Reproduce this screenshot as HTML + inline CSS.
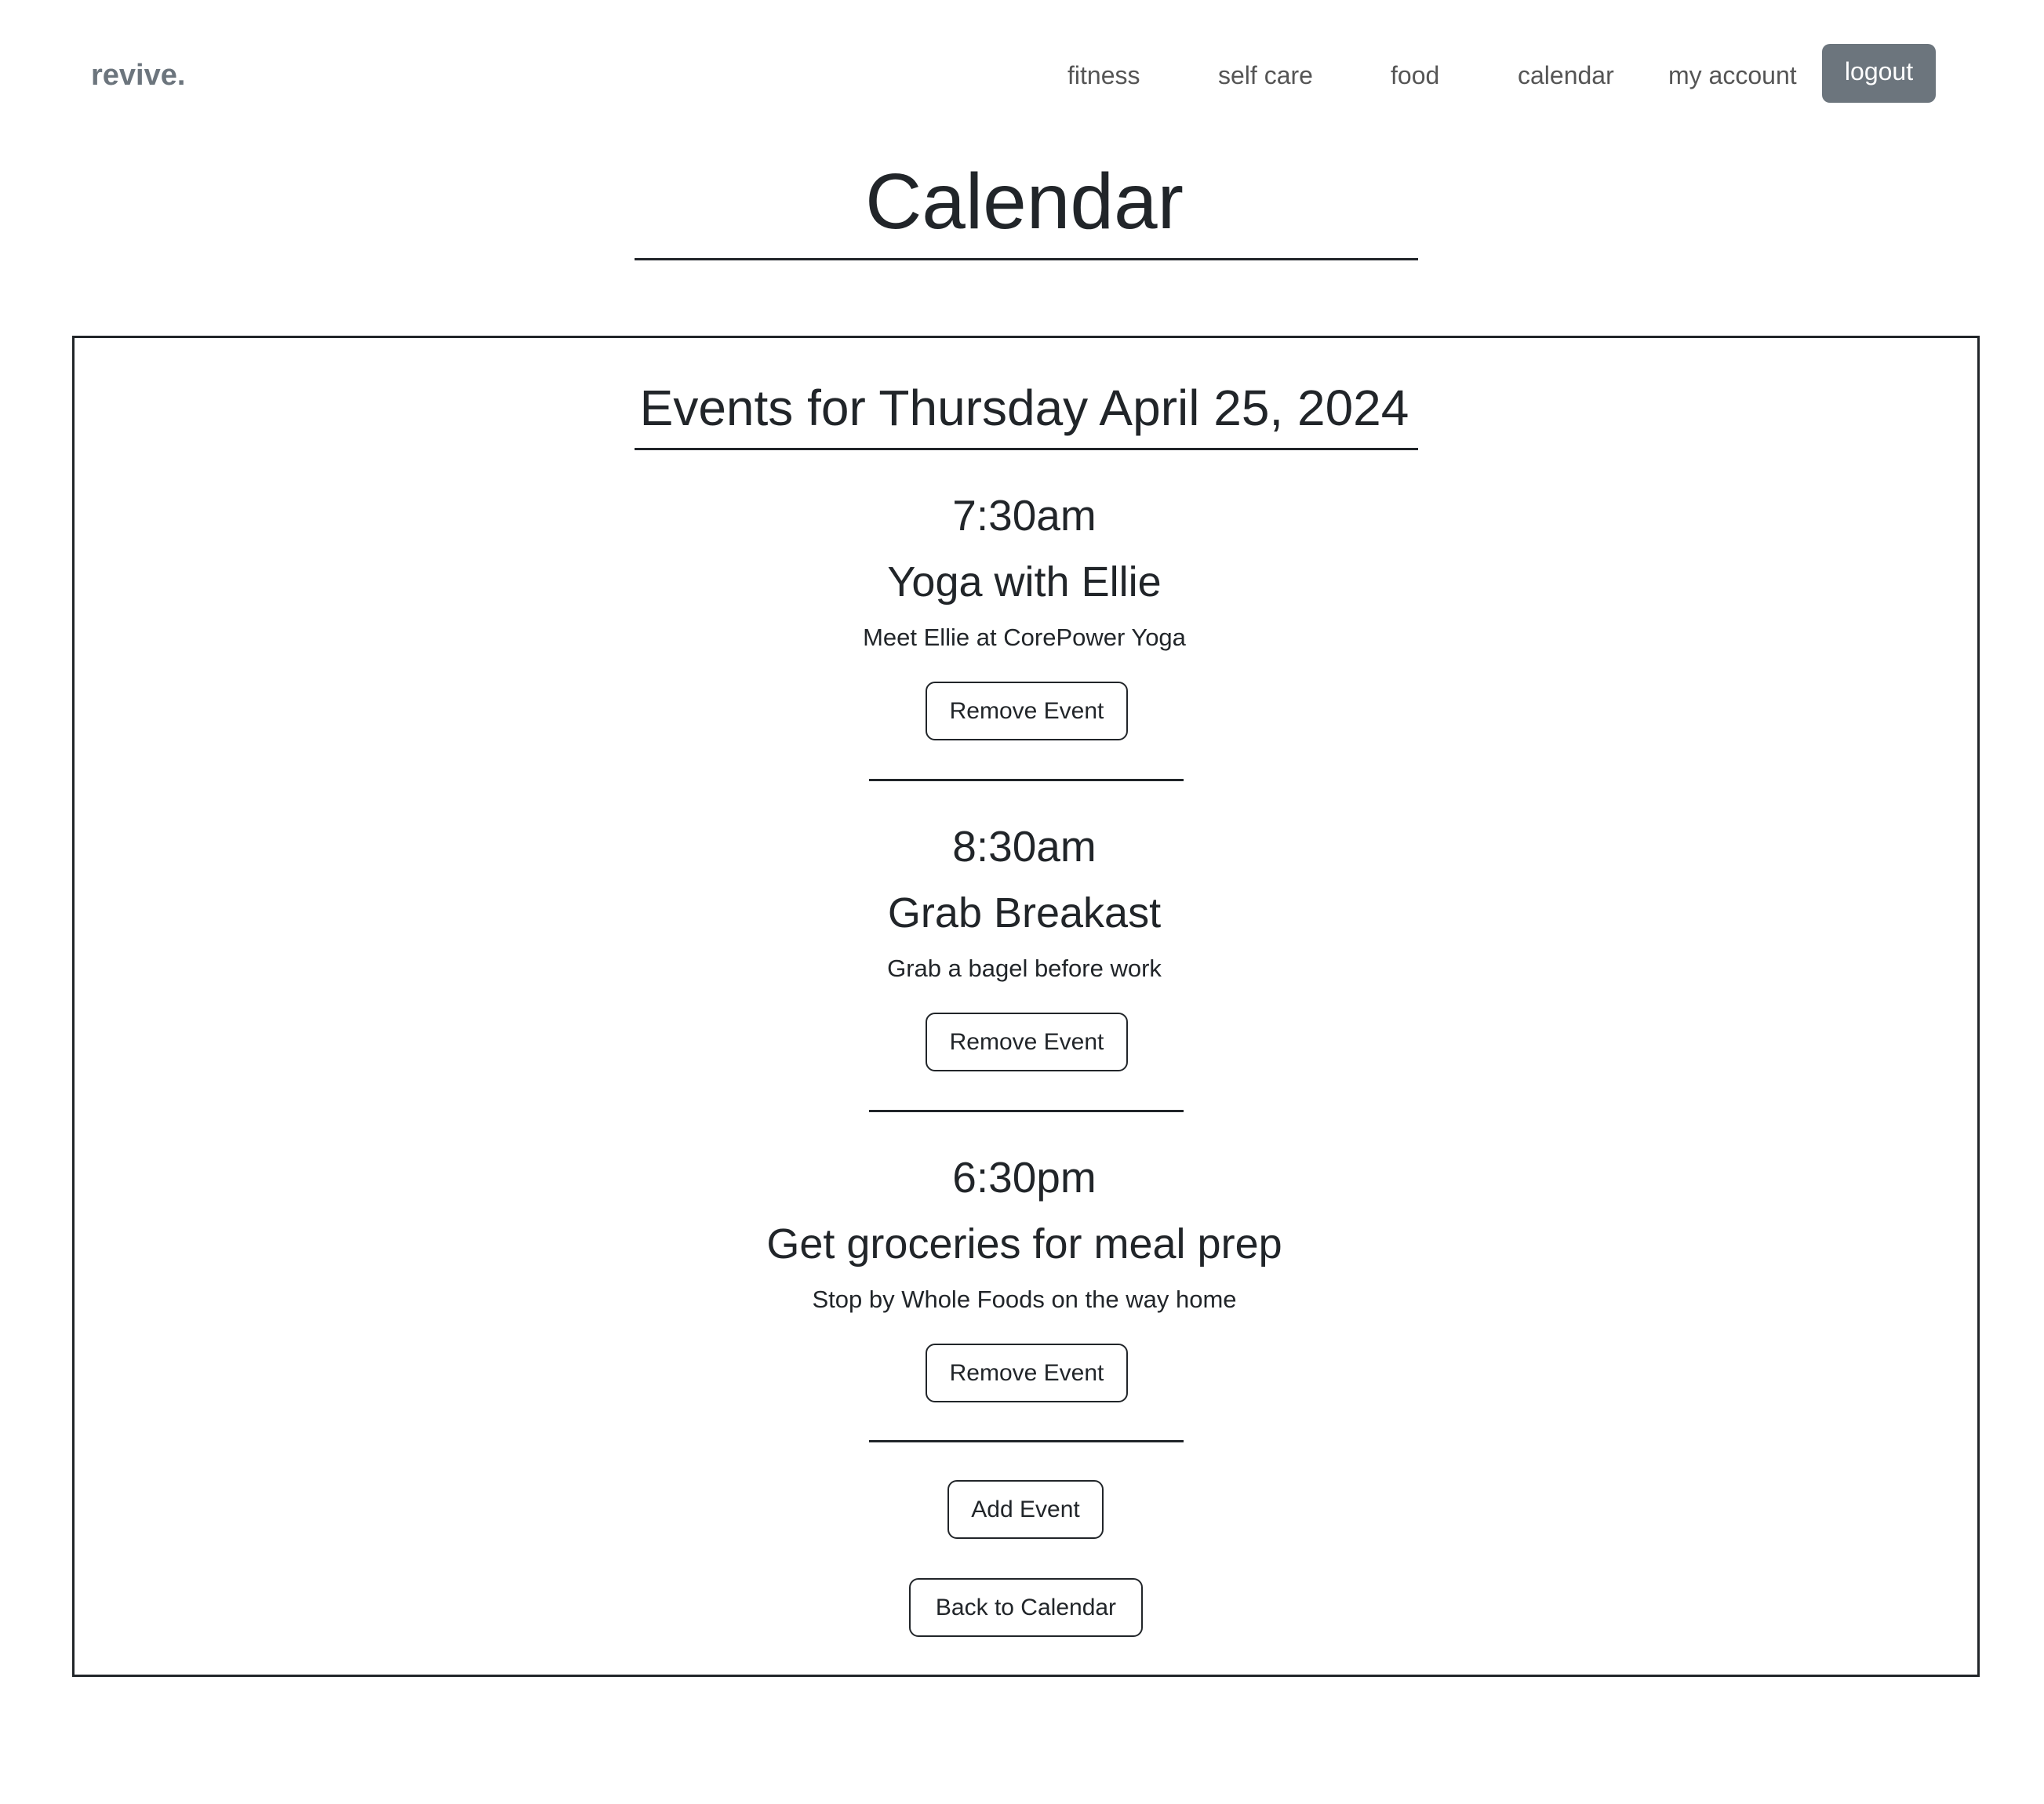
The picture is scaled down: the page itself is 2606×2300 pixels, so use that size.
<!DOCTYPE html>
<html><head><meta charset="utf-8"><style>
*{margin:0;padding:0;box-sizing:border-box}
body{width:2606px;height:2300px;background:#fff;font-family:"Liberation Sans",sans-serif;color:#212529;position:relative;overflow:hidden}
.a{position:absolute;white-space:nowrap}
.c{position:absolute;left:3px;width:2606px;text-align:center;white-space:nowrap}
.nav{font-size:32px;color:#555;top:76px;line-height:40px}
.line{position:absolute;background:#212529}
.btn{position:absolute;border:2px solid #212529;border-radius:12px;font-size:30px;display:flex;align-items:center;justify-content:center;color:#212529}
</style></head><body>
<div class="a" style="left:116px;top:74px;font-size:38px;font-weight:bold;color:#6c757d;line-height:44px">revive.</div>
<div class="a nav" style="left:1361px">fitness</div>
<div class="a nav" style="left:1553px">self care</div>
<div class="a nav" style="left:1773px">food</div>
<div class="a nav" style="left:1935px">calendar</div>
<div class="a nav" style="left:2127px">my account</div>
<div class="a" style="left:2323px;top:56px;width:145px;height:75px;background:#6c757d;border-radius:10px;color:#fff;font-size:32px;display:flex;align-items:center;justify-content:center;padding-bottom:4px">logout</div>

<div class="c" style="top:197px;font-size:100px;line-height:120px;font-weight:500">Calendar</div>
<div class="line" style="left:809px;top:329px;width:999px;height:3px"></div>

<div class="a" style="left:92px;top:428px;width:2432px;height:1710px;border:3px solid #212529"></div>

<div class="c" style="top:482px;font-size:64px;line-height:76px">Events for Thursday April 25, 2024</div>
<div class="line" style="left:809px;top:571px;width:999px;height:3px"></div>

<div class="c" style="top:627px;font-size:55px;line-height:60px">7:30am</div>
<div class="c" style="top:712px;font-size:54px;line-height:60px;font-weight:500">Yoga with Ellie</div>
<div class="c" style="top:795px;font-size:31px;line-height:36px">Meet Ellie at CorePower Yoga</div>
<div class="btn" style="left:1180px;top:869px;width:258px;height:75px">Remove Event</div>
<div class="line" style="left:1108px;top:993px;width:401px;height:3px"></div>

<div class="c" style="top:1049px;font-size:55px;line-height:60px">8:30am</div>
<div class="c" style="top:1134px;font-size:54px;line-height:60px;font-weight:500">Grab Breakast</div>
<div class="c" style="top:1217px;font-size:31px;line-height:36px">Grab a bagel before work</div>
<div class="btn" style="left:1180px;top:1291px;width:258px;height:75px">Remove Event</div>
<div class="line" style="left:1108px;top:1415px;width:401px;height:3px"></div>

<div class="c" style="top:1471px;font-size:55px;line-height:60px">6:30pm</div>
<div class="c" style="top:1556px;font-size:54px;line-height:60px;font-weight:500">Get groceries for meal prep</div>
<div class="c" style="top:1639px;font-size:31px;line-height:36px">Stop by Whole Foods on the way home</div>
<div class="btn" style="left:1180px;top:1713px;width:258px;height:75px">Remove Event</div>
<div class="line" style="left:1108px;top:1836px;width:401px;height:3px"></div>

<div class="btn" style="left:1208px;top:1887px;width:199px;height:75px">Add Event</div>
<div class="btn" style="left:1159px;top:2012px;width:298px;height:75px">Back to Calendar</div>
</body></html>
